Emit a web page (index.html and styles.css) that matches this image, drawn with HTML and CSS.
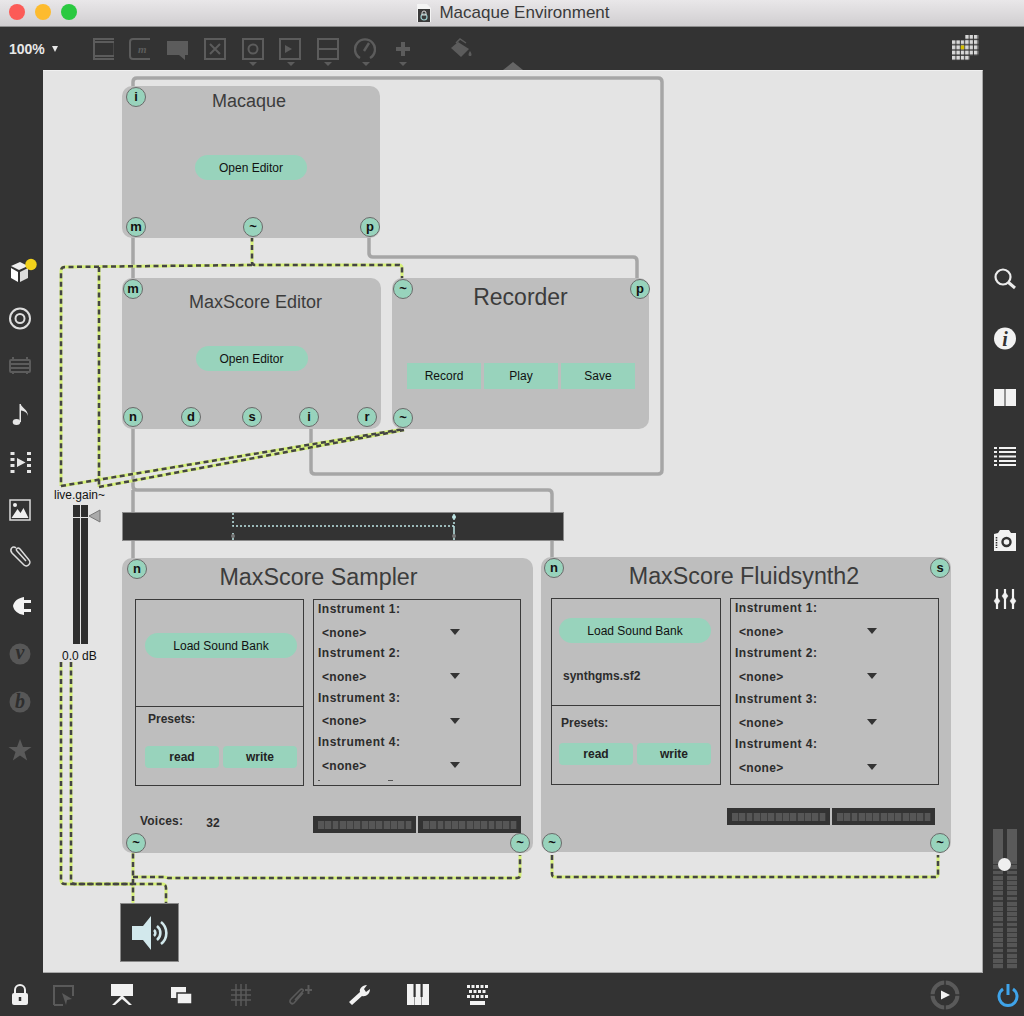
FILE: index.html
```html
<!DOCTYPE html>
<html lang="en">
<head>
<meta charset="utf-8">
<title>Macaque Environment</title>
<link rel="stylesheet" href="styles.css">
</head>
<body>
<div class="window">
  <header class="titlebar">
    <div class="lights"><i class="light red"></i><i class="light amber"></i><i class="light green"></i></div>
    <div class="title">
      <svg class="doc" width="14" height="18" viewBox="0 0 14 18"><path d="M0 0h10l4 4v14H0z" fill="#f4f4f4"/><rect x="1" y="5" width="12" height="13" fill="#3a3a3a"/><circle cx="7" cy="13" r="3" fill="none" stroke="#9cc" stroke-width="1.2"/><path d="M5 9a2 2 0 0 1 4 0v2H5z" fill="none" stroke="#ddd"/></svg>
      <span>Macaque Environment</span>
    </div>
  </header>

  <nav class="toolbar">
    <div class="zoom">100%<i class="zoom-arrow"></i></div>
    <div class="tools">
      <div class="tool"><svg width="22" height="22" viewBox="0 0 22 22" class="dim-line"><path d="M1 1h21M1 4h21M1 18h21M1 21h21M2 1v20" /><path d="M22 5v12" stroke-width="1"/></svg></div>
      <div class="tool"><svg width="22" height="22" viewBox="0 0 22 22" class="dim-line"><path d="M21 1H4a3 3 0 0 0-3 3v14a3 3 0 0 0 3 3h17"/><text x="9" y="15" class="tool-m">m</text></svg></div>
      <div class="tool"><svg width="22" height="22" viewBox="0 0 22 22" class="dim-fill"><path d="M0 3h21v14h-3v5l-6-5H0z"/></svg></div>
      <div class="tool"><svg width="22" height="22" viewBox="0 0 22 22" class="dim-line"><rect x="1" y="1" width="20" height="20"/><path d="M6 6l10 10M16 6L6 16"/></svg></div>
      <div class="tool more"><svg width="22" height="22" viewBox="0 0 22 22" class="dim-line"><rect x="1" y="1" width="20" height="20"/><circle cx="11" cy="11" r="4.5"/></svg></div>
      <div class="tool more"><svg width="22" height="22" viewBox="0 0 22 22" class="dim-line"><rect x="1" y="1" width="20" height="20"/><path class="solid" d="M6 7l7 4-7 4z"/></svg></div>
      <div class="tool more"><svg width="22" height="22" viewBox="0 0 22 22" class="dim-line"><rect x="1" y="1" width="20" height="20"/><path d="M2 11h18"/></svg></div>
      <div class="tool more"><svg width="22" height="22" viewBox="0 0 22 22" class="dim-line"><path d="M6 20a10 10 0 1 1 10 0" stroke-width="2.4"/><path d="M10 13l5-8" stroke-width="2.4"/></svg></div>
      <div class="tool more"><svg width="22" height="22" viewBox="0 0 22 22" class="dim-line"><path d="M11 4v14M4 11h14" stroke-width="4"/></svg></div>
      <div class="tool paint"><svg width="24" height="22" viewBox="0 0 24 22" class="dim-fill"><path d="M1 10L8 4l11 7-8 8z"/><path d="M6 5l4-4 6 4" fill="none" stroke="#5c5c5c" stroke-width="1.500"/><path d="M20 13c2 3 2 5 0 5s-2-2 0-5z"/></svg></div>
    </div>
    <div class="grid-mark">
      <svg width="27" height="26" viewBox="0 0 27 26"><defs><pattern id="cells" width="4.400" height="5.200" patternUnits="userSpaceOnUse"><rect width="3.400" height="3.900" fill="#d8d8d8"/></pattern></defs><path d="M13.200 0H26.400V20.800H17.600V26H0V5.200H13.200z" fill="url(#cells)"/><rect x="8.800" y="10.400" width="3.400" height="3.900" fill="#d8c000"/></svg>
    </div>
    <i class="caret"></i>
  </nav>

  <div class="middle">
    <aside class="side side-left">
      <div class="slot"><svg class="free" width="30" height="30" viewBox="0 0 30 30"><path d="M15 7l8 4-9 4-8-4z" fill="#eee"/><path d="M6 13l7 4v10l-7-4z" fill="#fff"/><path d="M15 17l8-4v10l-8 4z" fill="#ddd"/><circle cx="26" cy="9.500" r="5.700" fill="#f2d21b"/></svg></div>
      <div class="slot"><svg width="24" height="24" viewBox="0 0 24 24" fill="none" stroke="#ddd" stroke-width="2"><circle cx="12" cy="12.500" r="10"/><circle cx="12" cy="12.500" r="4.500"/></svg></div>
      <div class="slot"><svg width="24" height="24" viewBox="0 0 24 24" class="dim-line"><rect x="2" y="6" width="20" height="12" rx="1"/><path d="M2 10h20M2 14h20M5 3v3M19 3v3M5 18v2M19 18v2"/></svg></div>
      <div class="slot"><svg width="24" height="24" viewBox="0 0 24 24" fill="#e6e6e6"><ellipse cx="8.500" cy="20" rx="3.800" ry="3"/><path d="M11.500 20V2h1.300C13.500 6 20 7 20 14c-1-4-4-5-7-5.500V20z"/></svg></div>
      <div class="slot"><svg width="24" height="24" viewBox="0 0 24 24" fill="#e6e6e6"><path d="M2.500 2h4v3h-4zM2.500 8h4v3h-4zM2.500 14h4v3h-4zM2.500 20h4v3h-4zM19 2h4v3h-4zM19 8h4v3h-4zM19 14h4v3h-4zM19 20h4v3h-4zM9 8l8.500 4.500L9 17z"/></svg></div>
      <div class="slot"><svg width="24" height="24" viewBox="0 0 24 24"><rect x="2" y="2" width="20" height="20" fill="#333" stroke="#ddd" stroke-width="1.500"/><path d="M3.500 20l6-9 3 4 3-5 5 10z" fill="#f0f0f0"/><circle cx="7" cy="7" r="2" fill="#f0f0f0"/></svg></div>
      <div class="slot"><svg width="24" height="24" viewBox="0 0 24 24" fill="none" stroke="#ddd" stroke-width="1.500"><path d="M18 15L9 5c-2-2 1-4 3-2l9 11c3 3-2 8-5 5L4 7C1 3 5-1 8 2"/></svg></div>
      <div class="slot"><svg width="24" height="24" viewBox="0 0 24 24" fill="#f4f4f4"><path d="M2 12h3c1-5 5-8 11-9v18c-6-1-10-4-11-9H2z"/><path d="M15 6h8v3h-8zM15 15h8v3h-8z"/></svg></div>
      <div class="slot"><svg width="24" height="24" viewBox="0 0 24 24"><circle cx="12" cy="12" r="10.500" fill="#575757"/><text x="12" y="17" class="badge-letter">v</text></svg></div>
      <div class="slot"><svg width="24" height="24" viewBox="0 0 24 24"><circle cx="12" cy="12" r="10.500" fill="#575757"/><text x="12" y="18" class="badge-letter">b</text></svg></div>
      <div class="slot"><svg width="24" height="24" viewBox="0 0 24 24"><path d="M12 1l3 8h8.500l-7 5 2.700 8.500L12 17.500 4.800 22.500 7.500 14l-7-5H9z" fill="#5a5a5a"/></svg></div>
    </aside>

    <main class="canvas">
      <svg class="wires" width="940" height="903" viewBox="43 70 940 903" fill="none">
        <defs>
          <path id="s1" d="M252 228V262Q252 265 255 265H399Q402 265 402 268V288"/>
          <path id="s2" d="M252 265L65 267Q61 267 61 271V486"/>
          <path id="s3" d="M99 267V487"/>
          <path id="s4" d="M61 486L404 429"/>
          <path id="s5" d="M99 487L404 430"/>
          <path id="s6" d="M61 662V880Q61 884 65 884H133"/>
          <path id="s7" d="M71 662V880Q71 884 75 884H162Q166 884 166 888V903"/>
          <path id="s8" d="M133 845V903"/>
          <path id="s9" d="M133 877H163Q166 877 168 878H517Q520 878 520 875V855"/>
          <path id="s10" d="M552 855V874Q552 877 555 877H935Q938 877 938 874V855"/>
        </defs>
        <g class="wire-grey">
          <path d="M133 97V82Q133 78 137 78H658Q662 78 662 82V470Q662 474 658 474H315Q311 474 311 470V420"/>
          <path d="M133 228V288"/>
          <path d="M369 228V253Q369 257 373 257H633Q637 257 637 261V288"/>
          <path d="M133 418V486Q133 490 137 490H548Q552 490 552 494V568"/>
          <path d="M133 490V568"/>
        </g>
        <g class="wire-base">
          <use href="#s1"/><use href="#s2"/><use href="#s3"/><use href="#s4"/><use href="#s5"/><use href="#s6"/><use href="#s7"/><use href="#s8"/><use href="#s9"/><use href="#s10"/>
        </g>
        <g class="wire-dash">
          <use href="#s1"/><use href="#s2"/><use href="#s3"/><use href="#s4"/><use href="#s5"/><use href="#s6"/><use href="#s7"/><use href="#s8"/><use href="#s9"/><use href="#s10"/>
        </g>
      </svg>

      <section class="node panel macaque">
        <h2 class="name name-s">Macaque</h2>
        <button class="pill open">Open Editor</button>
        <span class="port p-mac-i">i</span><span class="port p-mac-m">m</span><span class="port p-mac-t">~</span><span class="port p-mac-p">p</span>
      </section>

      <section class="node panel editor">
        <h2 class="name name-e">MaxScore Editor</h2>
        <button class="pill open">Open Editor</button>
        <span class="port p-ed-m">m</span><span class="port p-ed-n">n</span><span class="port p-ed-d">d</span><span class="port p-ed-s">s</span><span class="port p-ed-i">i</span><span class="port p-ed-r">r</span>
      </section>

      <section class="node panel recorder">
        <h2 class="name name-r">Recorder</h2>
        <div class="rec-buttons"><button class="flat">Record</button><button class="flat">Play</button><button class="flat">Save</button></div>
        <span class="port p-rec-a">~</span><span class="port p-rec-p">p</span><span class="port p-rec-b">~</span>
      </section>

      <div class="node gain-label">live.gain~</div>
      <div class="node gain">
        <div class="gain-bars"><i class="gain-bar"></i><i class="gain-bar"></i></div>
        <svg class="gain-thumb" width="14" height="14" viewBox="0 0 14 14"><path d="M1 7l11-6v12z" fill="#aaa" stroke="#777"/></svg>
      </div>
      <div class="node gain-value">0.0 dB</div>

      <div class="node sequencer">
        <svg width="442" height="28" viewBox="0 0 442 28" fill="none"><path class="seq-line" d="M110 0V13H331V0"/><path class="seq-tick" d="M110 20V28M331 13V28"/><circle cx="110" cy="23" r="2" fill="#777"/><circle cx="331" cy="4" r="2" fill="#bfe6e6"/><circle cx="331" cy="23" r="2" fill="#777"/></svg>
      </div>

      <section class="node panel big sampler">
        <h2 class="name name-b name-sa">MaxScore Sampler</h2>
        <div class="boxes">
          <div class="box-left">
            <div class="box-top"><button class="pill load load-a">Load Sound Bank</button></div>
            <div class="box-bottom">
              <div class="presets">Presets:</div>
              <div class="rw"><button class="rw-btn">read</button><button class="rw-btn">write</button></div>
            </div>
          </div>
          <div class="box-right">
            <div class="inst">Instrument 1:</div><div class="menu"><span>&lt;none&gt;</span><i class="tri"></i></div>
            <div class="inst">Instrument 2:</div><div class="menu"><span>&lt;none&gt;</span><i class="tri"></i></div>
            <div class="inst">Instrument 3:</div><div class="menu"><span>&lt;none&gt;</span><i class="tri"></i></div>
            <div class="inst">Instrument 4:</div><div class="menu"><span>&lt;none&gt;</span><i class="tri"></i></div>
            <div class="clipped-marks"></div>
          </div>
        </div>
        <div class="foot">
          <div class="voices"><span>Voices:</span><span class="voices-n">32</span></div>
          <div class="meters"><i class="meter"></i><i class="meter"></i></div>
        </div>
        <span class="port p-sa-n">n</span><span class="port p-sa-l">~</span><span class="port p-sa-r">~</span>
      </section>

      <section class="node panel big fluid">
        <h2 class="name name-b name-fl">MaxScore Fluidsynth2</h2>
        <div class="boxes">
          <div class="box-left">
            <div class="box-top box-top-f"><button class="pill load">Load Sound Bank</button><div class="bank">synthgms.sf2</div></div>
            <div class="box-bottom box-bottom-f">
              <div class="presets presets-f">Presets:</div>
              <div class="rw"><button class="rw-btn">read</button><button class="rw-btn">write</button></div>
            </div>
          </div>
          <div class="box-right">
            <div class="inst">Instrument 1:</div><div class="menu"><span>&lt;none&gt;</span><i class="tri"></i></div>
            <div class="inst">Instrument 2:</div><div class="menu"><span>&lt;none&gt;</span><i class="tri"></i></div>
            <div class="inst">Instrument 3:</div><div class="menu"><span>&lt;none&gt;</span><i class="tri"></i></div>
            <div class="inst">Instrument 4:</div><div class="menu"><span>&lt;none&gt;</span><i class="tri"></i></div>
          </div>
        </div>
        <div class="foot foot-f">
          <div class="meters"><i class="meter"></i><i class="meter"></i></div>
        </div>
        <span class="port p-fl-n">n</span><span class="port p-fl-s">s</span><span class="port p-fl-l">~</span><span class="port p-fl-r">~</span>
      </section>

      <div class="node dac">
        <svg width="38" height="36" viewBox="0 0 38 36"><path d="M1 11h11l8-10v34l-8-10H1z" fill="#d2e8ec"/><g fill="none" stroke="#d2e8ec" stroke-width="2.600"><path d="M23 15a4 4 0 0 1 0 6"/><path d="M26 11a9 9 0 0 1 0 14"/><path d="M30 7a14 14 0 0 1 0 22"/></g></svg>
      </div>
    </main>

    <aside class="side side-right">
      <div class="slot-r"><svg width="24" height="24" viewBox="0 0 24 24" fill="none" stroke="#ececec"><circle cx="10" cy="10" r="7.500" stroke-width="2.200"/><path d="M15.500 15.500L22 21" stroke-width="3"/></svg></div>
      <div class="slot-r"><svg width="24" height="24" viewBox="0 0 24 24"><circle cx="12" cy="12.500" r="11" fill="#f2f2f2"/><text x="12" y="19.500" class="info-i">i</text></svg></div>
      <div class="slot-r"><svg width="24" height="24" viewBox="0 0 24 24" fill="#f2f2f2"><path d="M1 4h10.500v17H1zM12.500 4H23v17H12.500z"/></svg></div>
      <div class="slot-r"><svg width="24" height="24" viewBox="0 0 24 24" fill="#f2f2f2"><path d="M1 2h3v2H1zM6 2h17v2H6zM1 6h3v2H1zM6 6h17v2H6zM1 10.500h3v2H1zM6 10.500h17v2H6zM1 15h3v2H1zM6 15h17v2H6zM1 19h3v2H1zM6 19h17v2H6z"/></svg></div>
      <div class="slot-r slot-gap"><svg width="24" height="24" viewBox="0 0 24 24"><path d="M1 6l4-1 2-3h9l2 3h5v18H1z" fill="#f2f2f2"/><circle cx="13.500" cy="14" r="4" fill="none" stroke="#333" stroke-width="2.400"/><path d="M3.500 9v11" stroke="#333" stroke-width="1.600" stroke-dasharray="1.500 1"/></svg></div>
      <div class="slot-r"><svg width="24" height="24" viewBox="0 0 24 24" fill="#f2f2f2" stroke="#f2f2f2" stroke-width="2.200"><path d="M4 2v20M12 2v20M20 2v20" fill="none"/><path d="M4 10l3 4-3 4-3-4zM12 5l3 4-3 4-3-4zM20 10l3 4-3 4-3-4z" stroke-width="0.500"/></svg></div>
      <div class="master">
        <i class="master-bar"></i><i class="master-bar"></i>
        <i class="master-knob"></i>
      </div>
    </aside>
  </div>

  <footer class="bottombar">
    <div class="slot-b slot-lock"><svg width="20" height="22" viewBox="0 0 20 22"><path d="M5 10V6a5 5 0 0 1 10 0v4" fill="none" stroke="#f0f0f0" stroke-width="2"/><rect x="2" y="9" width="16" height="12" rx="2" fill="#f0f0f0"/><path d="M10 13v4" stroke="#333" stroke-width="2.500"/></svg></div>
    <div class="slot-b"><svg width="24" height="22" viewBox="0 0 24 22" fill="none"><path d="M3 21V2h19v10M3 21h9" stroke="#5a5a5a" stroke-width="2"/><path d="M11 9l10 6-5 1-1 5z" fill="#5a5a5a"/></svg></div>
    <div class="slot-b"><svg width="24" height="22" viewBox="0 0 24 22" fill="#f2f2f2"><rect x="1" y="0" width="22" height="12"/><path d="M11 12L2 21h3l7-6 7 6h3l-9-9z"/></svg></div>
    <div class="slot-b"><svg width="24" height="22" viewBox="0 0 24 22"><rect x="2" y="3" width="15" height="11" fill="#f2f2f2"/><rect x="8" y="9" width="15" height="11" fill="#f2f2f2" stroke="#333" stroke-width="1.500"/></svg></div>
    <div class="slot-b"><svg width="24" height="22" viewBox="0 0 24 22" stroke="#5a5a5a" stroke-width="1.500"><path d="M7 0v22M12 0v22M17 0v22M2 6h20M2 11h20M2 16h20"/></svg></div>
    <div class="slot-b"><svg width="24" height="22" viewBox="0 0 24 22" fill="none" stroke="#5a5a5a" stroke-width="1.600"><path d="M15 9L6 19c-2 2-6-1-3-4l9-9c2-2 4 0 3 1l-8 9"/><path d="M17 6h7M20.500 1v9" stroke-width="2"/></svg></div>
    <div class="slot-b"><svg width="24" height="22" viewBox="0 0 24 22" fill="#f2f2f2"><path d="M2 18L13 8c-1-3 2-7 7-7l-3 4 2 3 4-3c0 5-4 8-8 7L5 21z"/></svg></div>
    <div class="slot-b"><svg width="24" height="22" viewBox="0 0 24 22"><rect x="1" y="0" width="22" height="21" fill="#f2f2f2"/><path d="M8.500 13v8M15.500 13v8" stroke="#999"/><path d="M7.500 0h2.200v13H7.500zM14.500 0h2.200v13h-2.200z" fill="#333"/></svg></div>
    <div class="slot-b"><svg width="24" height="22" viewBox="0 0 24 22" fill="#f2f2f2"><path d="M1 1h3v3H1zM5.500 1h3v3h-3zM10 1h3v3h-3zM14.500 1h3v3h-3zM19 1h3v3h-3zM3 6h3v3H3zM7.500 6h3v3h-3zM12 6h3v3h-3zM16.500 6h3v3h-3zM1 11h3v3H1zM5.500 11h3v3h-3zM10 11h3v3h-3zM14.500 11h3v3h-3zM19 11h3v3h-3zM4 17h15v4H4z"/></svg></div>
    <div class="bottom-right">
      <div class="play"><svg width="32" height="32" viewBox="0 0 32 32"><circle cx="16" cy="16" r="12.500" fill="none" stroke="#5a5a5a" stroke-width="4"/><path d="M16 0v6M16 26v6M0 16h6M26 16h6" stroke="#333" stroke-width="1.500"/><path d="M12 11.500l9 4.500-9 4.500z" fill="#f2f2f2"/></svg></div>
      <div class="power"><svg width="22" height="24" viewBox="0 0 22 24" fill="none" stroke="#3fa4ea" stroke-width="3"><path d="M6 6a9 9 0 1 0 10 0"/><path d="M11 1v11"/></svg></div>
    </div>
  </footer>
</div>
</body>
</html>
```
FILE: styles.css
```css
* { box-sizing: border-box; }
html, body { margin: 0; padding: 0; }
body { background: #333; font-family: "Liberation Sans", Arial, sans-serif; color: #222; }
svg { display: block; }
.free { overflow: visible; }
button { font-family: inherit; border: 0; padding: 0; margin: 0; color: #111; }
h2 { margin: 0; font-weight: normal; }

.window { width: 1024px; height: 1016px; display: flex; flex-direction: column; overflow: hidden; background: #333; }

/* title bar */
.titlebar { height: 27px; flex: none; position: relative; display: flex; align-items: center; justify-content: center;
  background: linear-gradient(#e9e7e9, #d0ced0); border-bottom: 1px solid #8e8e8e; }
.lights { position: absolute; left: 9px; top: 4px; display: flex; gap: 10px; }
.light { display: block; width: 16px; height: 16px; border-radius: 50%; }
.red { background: #fc5b57; }
.amber { background: #fdbb2e; }
.green { background: #2ac940; }
.title { display: flex; align-items: center; gap: 8px; font-size: 17px; color: #3a3a3a; margin-left: 3px; }

/* toolbar */
.toolbar { height: 43px; flex: none; display: flex; align-items: center; position: relative; padding-left: 9px; background: #333; }
.zoom { width: 75px; color: #e8e8e8; font-size: 14px; font-weight: bold; display: flex; align-items: center; gap: 7px; margin-top: 1px; }
.zoom-arrow { width: 0; height: 0; border-left: 3.5px solid transparent; border-right: 3.5px solid transparent; border-top: 6px solid #e8e8e8; }
.tools { display: flex; align-items: center; }
.tool { width: 37.5px; height: 26px; display: flex; align-items: center; justify-content: center; position: relative; }
.tool.more::after { content: ""; position: absolute; left: 15px; top: 26px; border-left: 4px solid transparent; border-right: 4px solid transparent; border-top: 4px solid #5c5c5c; }
.paint { margin-left: 22px; }
.grid-mark { margin-left: auto; margin-right: 45px; margin-top: -1px; }
.caret { position: absolute; left: 503px; top: 35px; border-left: 10px solid transparent; border-right: 10px solid transparent; border-bottom: 8px solid #666; }
.dim-line { fill: none; stroke: #5c5c5c; stroke-width: 2; }
.dim-line .solid { fill: #5c5c5c; stroke: none; }
.dim-fill { fill: #5c5c5c; }
.tool-m { font: italic bold 11px "Liberation Serif", serif; fill: #5c5c5c; stroke: none; }

/* middle */
.middle { flex: 1; display: flex; min-height: 0; }
.side { flex: none; display: flex; flex-direction: column; align-items: center; }
.side-left { width: 43px; padding-top: 176px; padding-right: 3px; }
.slot { height: 48px; flex: none; display: flex; align-items: center; justify-content: center; }
.badge-letter { font: italic bold 20px "Liberation Serif", serif; fill: #2e2e2e; text-anchor: middle; }
.side-right { width: 41px; padding-top: 179px; position: relative; padding-left: 3px; }
.slot-r { height: 59.300px; flex: none; display: flex; align-items: center; justify-content: center; }
.slot-gap { margin-top: 24px; }
.info-i { font: italic bold 20px "Liberation Serif", serif; fill: #333; text-anchor: middle; }
.master { margin-top: auto; margin-bottom: 4px; width: 24px; height: 140px; display: flex; justify-content: space-between; position: relative; margin-left: -1px; }
.master-bar { display: block; width: 10px; height: 100%;
  background: linear-gradient(#5a5a5a, #5a5a5a) top / 100% 32px no-repeat,
    repeating-linear-gradient(#565656 0 3.800px, #3a3a3a 3.800px 5.200px); }
.master-knob { position: absolute; left: 5.500px; top: 29px; width: 13px; height: 13px; border-radius: 50%; background: #efefef; }

/* canvas */
.canvas { flex: 1; position: relative; background: #e4e4e4; border-right: 1px solid #a8a8a8; border-bottom: 1px solid #a8a8a8; border-top: 1px solid #f0f0f0; overflow: hidden; }
.wires { position: absolute; left: 0; top: -1px; }
.wire-grey { stroke: #a6a6a6; stroke-width: 3.500px; }
.wire-base { stroke: #d6f07a; stroke-width: 3px; }
.wire-dash { stroke: #444; stroke-width: 2.500px; stroke-dasharray: 5 3.500; }

.node { position: absolute; }
.panel { background: #bebebe; border-radius: 10px; }
.macaque { left: 79px; top: 15px; width: 258px; height: 152px; text-align: center; }
.editor { left: 79px; top: 207px; width: 259px; height: 151px; text-align: center; }
.recorder { left: 349px; top: 207px; width: 257px; height: 151px; text-align: center; }
.big { width: 411px; height: 295px; }
.sampler { left: 79px; top: 487px; }
.fluid { left: 498px; top: 486px; width: 410px; }

.name { color: #3c3c3c; text-align: center; position: relative; }
.name-s { font-size: 18px; padding-top: 4px; line-height: 22px; height: 69px; left: -2px; }
.name-e { font-size: 18px; padding-top: 14px; line-height: 20px; height: 68px; left: 4px; }
.name-r { font-size: 23px; padding-top: 5px; line-height: 28px; height: 85px; }
.name-b { font-size: 23.300px; padding-top: 6px; line-height: 26px; height: 41px; }
.name-sa { left: -9px; }
.name-fl { left: -2px; }

.pill { background: #98d3bc; border-radius: 13px; font-size: 12px; }
.open { display: block; width: 112px; height: 25px; margin: 0 auto; }
.rec-buttons { display: flex; gap: 3px; padding-left: 15px; }
.flat { width: 74px; height: 26px; background: #98d3bc; font-size: 12px; }

/* boxes */
.boxes { display: flex; padding-left: 13px; gap: 9px; }
.fluid .boxes { padding-left: 10px; gap: 9px; }
.box-left { width: 169px; height: 187px; border: 1px solid #3a3a3a; display: flex; flex-direction: column; }
.fluid .box-left { width: 170px; }
.box-right { width: 208px; height: 187px; border: 1px solid #3a3a3a; padding: 2px 4px 0; overflow: hidden; }
.fluid .box-right { width: 209px; padding-top: 2px; }
.box-top { height: 107px; border-bottom: 1px solid #3a3a3a; padding: 33px 0 0 9px; }
.box-top-f { padding: 19px 0 0 7px; }
.load { display: block; width: 152px; height: 25px; }
.bank { font-size: 12px; font-weight: bold; color: #2c2c2c; padding: 26px 0 0 4px; line-height: 14px; }
.box-bottom { flex: 1; padding: 5px 0 0 9px; }
.box-bottom-f { padding-top: 6px; padding-left: 7px; }
.presets { font-size: 12px; font-weight: bold; color: #2c2c2c; padding-left: 3px; line-height: 14px; height: 34px; }
.presets-f { padding-top: 4px; height: 31px; padding-left: 2px; }
.rw { display: flex; gap: 4px; }
.rw-btn { width: 74px; height: 22px; background: #98d3bc; border-radius: 4px; font-size: 12px; font-weight: bold; color: #222; }
.inst { font-size: 12px; font-weight: bold; color: #2c2c2c; line-height: 14px; height: 15px; letter-spacing: 0.500px; }
.menu { height: 29.300px; padding-top: 2px; display: flex; align-items: center; font-size: 12px; font-weight: bold; color: #2c2c2c; padding-left: 4px; position: relative; letter-spacing: 0.300px; }
.fluid .menu { height: 30.300px; }
.tri { position: absolute; left: 132px; top: 12px; border-left: 5px solid transparent; border-right: 5px solid transparent; border-top: 6px solid #333; }
.clipped-marks { height: 1px; width: 80px; margin-top: 1px;
  background: linear-gradient(90deg, #555 0 2px, transparent 2px 70px, #555 70px 75px, transparent 75px); }
.foot { display: flex; justify-content: space-between; padding: 30px 12px 0 18px; align-items: flex-start; }
.foot-f { padding-top: 23px; padding-right: 16px; justify-content: flex-end; }
.voices { font-size: 12px; font-weight: bold; color: #2c2c2c; display: flex; gap: 23px; margin-top: -2px; letter-spacing: 0.200px; }
.voices-n { padding-top: 2px; }
.meters { display: flex; gap: 2px; }
.meter { display: block; width: 103px; height: 17px; background-color: #333;
  background-image: repeating-linear-gradient(90deg, #565656 0 5.800px, #3e3e3e 5.800px 7.300px);
  background-size: 94px 8px; background-position: 5px 5px; background-repeat: no-repeat; }

/* ports */
.port { position: absolute; width: 20px; height: 20px; border-radius: 50%; background: #98d3bc; border: 1.500px solid #6a6a6a;
  display: flex; align-items: center; justify-content: center; font-size: 13px; font-weight: bold; color: #111; line-height: 1; padding-bottom: 1px; }
.p-mac-i { left: 4px; top: 1px; }
.p-mac-m { left: 4px; top: 131px; }
.p-mac-t { left: 121px; top: 131px; }
.p-mac-p { left: 238px; top: 131px; }
.p-ed-m { left: 1px; top: 1px; }
.p-ed-n { left: 1px; top: 129px; }
.p-ed-d { left: 59px; top: 129px; }
.p-ed-s { left: 120px; top: 129px; }
.p-ed-i { left: 177px; top: 129px; }
.p-ed-r { left: 235px; top: 129px; }
.p-rec-a { left: 1px; top: 1px; }
.p-rec-p { left: 238px; top: 1px; }
.p-rec-b { left: 1px; top: 130px; }
.p-sa-n { left: 5px; top: 1px; }
.p-sa-l { left: 4px; top: 275px; }
.p-sa-r { left: 388px; top: 275px; }
.p-fl-n { left: 3px; top: 1px; }
.p-fl-s { left: 389px; top: 1px; }
.p-fl-l { left: 1px; top: 276px; }
.p-fl-r { left: 389px; top: 276px; }

/* live.gain */
.gain-label { left: 11px; top: 417px; font-size: 12px; line-height: 14px; color: #111; }
.gain { left: 30px; top: 434px; display: flex; }
.gain-bars { display: flex; gap: 1px; }
.gain-bar { display: block; width: 7px; height: 139px;
  background: linear-gradient(#2e2e2e 12px, #e4e4e4 12px 13px, #2e2e2e 13px); }
.gain-thumb { margin-left: 0; margin-top: 4px; }
.gain-value { left: 19px; top: 578px; font-size: 12px; line-height: 14px; color: #111; }

/* sequencer */
.sequencer { left: 79px; top: 441px; width: 442px; height: 29px; background: #333; border: 1px solid #8a8a8a; overflow: hidden; }
.seq-line { stroke: #bfe6e6; stroke-width: 1.500px; stroke-dasharray: 2 2; }
.seq-tick { stroke: #bfe6e6; stroke-width: 1.500px; }

/* dac */
.dac { left: 77px; top: 832px; width: 59px; height: 59px; background: #333; border: 1px solid #8a8a8a; display: flex; align-items: center; justify-content: center; }

/* bottom */
.bottombar { height: 43px; flex: none; display: flex; align-items: center; position: relative; }
.slot-b { width: 59.300px; flex: none; display: flex; justify-content: center; }
.slot-lock { width: 26px; margin-left: 7px; }
.bottom-right { margin-left: auto; display: flex; align-items: center; gap: 36px; padding-right: 5px; }
.play, .power { flex: none; }
```
